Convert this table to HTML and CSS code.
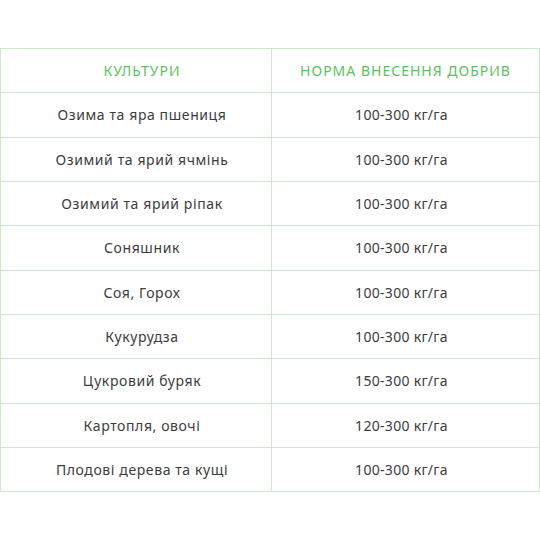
FILE: index.html
```html
<!DOCTYPE html>
<html lang="uk">
<head>
<meta charset="utf-8">
<link rel="stylesheet" href="styles.css">
</head>
<body>
<table class="rates">
  <thead>
    <tr><th class="c1">КУЛЬТУРИ</th><th class="c2">НОРМА ВНЕСЕННЯ ДОБРИВ</th></tr>
  </thead>
  <tbody>
    <tr><td class="c1">Озима та яра пшениця</td><td class="c2">100-300 кг/га</td></tr>
    <tr><td class="c1">Озимий та ярий ячмінь</td><td class="c2">100-300 кг/га</td></tr>
    <tr><td class="c1">Озимий та ярий ріпак</td><td class="c2">100-300 кг/га</td></tr>
    <tr><td class="c1">Соняшник</td><td class="c2">100-300 кг/га</td></tr>
    <tr><td class="c1">Соя, Горох</td><td class="c2">100-300 кг/га</td></tr>
    <tr><td class="c1">Кукурудза</td><td class="c2">100-300 кг/га</td></tr>
    <tr><td class="c1">Цукровий буряк</td><td class="c2">150-300 кг/га</td></tr>
    <tr><td class="c1">Картопля, овочі</td><td class="c2">120-300 кг/га</td></tr>
    <tr><td class="c1">Плодові дерева та кущі</td><td class="c2">100-300 кг/га</td></tr>
  </tbody>
</table>
</body>
</html>
```
FILE: styles.css
```css
html, body {
  margin: 0;
  background: #ffffff;
}
body {
  padding-top: 48px;
  font-family: "Noto Sans", "DejaVu Sans", sans-serif;
}
.rates {
  width: 540px;
  border-collapse: collapse;
  table-layout: fixed;
}
.rates th, .rates td {
  border: 1px solid #cdeacd;
  text-align: center;
  height: 43.33px;
  padding: 0;
  font-size: 14px;
  color: #3c3c3c;
  font-weight: 400;
}
.rates th {
  color: #5cc25e;
  letter-spacing: 1px;
}
.rates td.c1 {
  letter-spacing: 0.6px;
}
.rates td.c2 {
  letter-spacing: 0.3px;
  padding-right: 8px;
}
.rates .c1 {
  width: 258px;
  padding-left: 12px;
}
```
